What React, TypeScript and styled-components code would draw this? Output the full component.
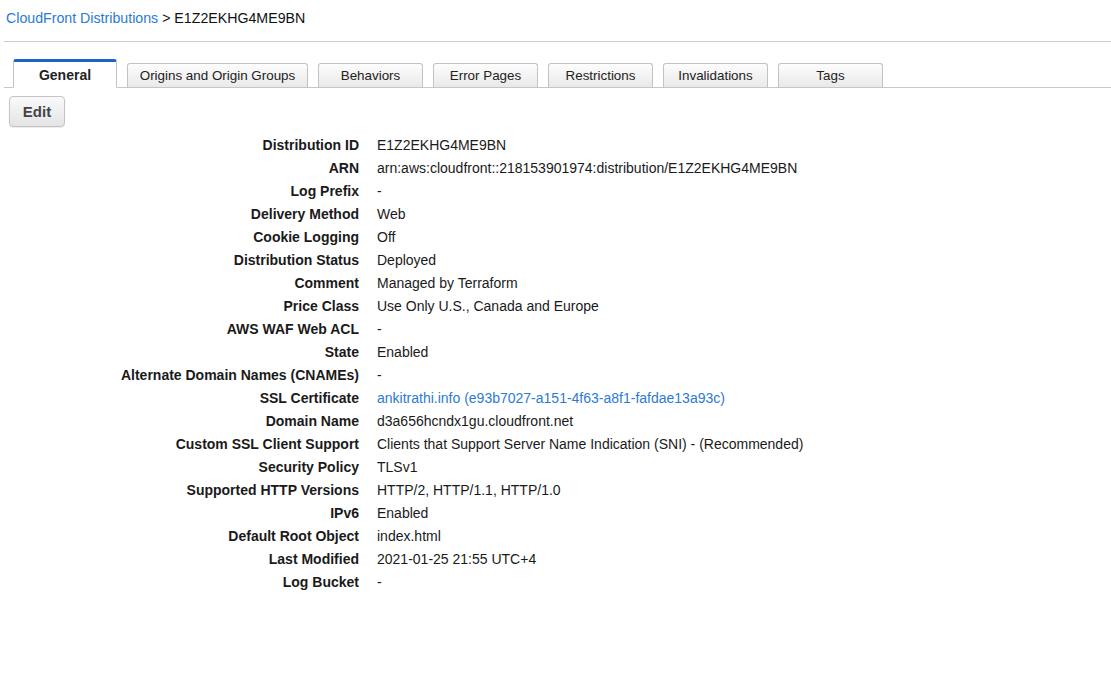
import React from "react";
import styled, { createGlobalStyle } from "styled-components";

const Global = createGlobalStyle`
  html, body { margin: 0; padding: 0; background: #fff; }
  body { font-family: "Liberation Sans", Arial, Helvetica, sans-serif; color: #222; font-size: 14px; }
`;

const Page = styled.div`
  padding-left: 4px;
  width: 1107px;
`;

const Breadcrumb = styled.div`
  margin-top: 8px;
  padding-left: 2px;
  line-height: 20px;
  font-size: 14.2px;
  color: #111;
`;

const Crumb = styled.a`
  color: #2b7bd3;
  text-decoration: none;
`;

const Rule = styled.div`
  margin-top: 13px;
  height: 1px;
  background: #cccccc;
`;

const TabStrip = styled.div`
  margin-top: 17px;
  display: flex;
  align-items: flex-end;
  gap: 10px;
  padding-left: 9px;
  border-bottom: 1px solid #c6c6c6;
  height: 28px;
`;

const Tab = styled.div<{ $active?: boolean; $w: number }>`
  box-sizing: border-box;
  width: ${(p) => p.$w}px;
  margin-bottom: -1px;
  text-align: center;
  font-size: 13.4px;
  color: #222;
  border: 1px solid #c2c2c2;
  border-radius: 3px 3px 0 0;
  ${(p) =>
    p.$active
      ? `
    height: 29px;
    line-height: 26px;
    font-size: 14px;
    font-weight: bold;
    background: #fff;
    border-top: 3px solid #1a66c8;
    border-bottom: 1px solid #fff;
  `
      : `
    height: 25px;
    line-height: 24px;
    background: linear-gradient(#fdfdfd, #e9e9e9);
    border-bottom: 1px solid #c6c6c6;
  `}
`;

const EditButton = styled.button`
  margin: 8px 0 0 5px;
  width: 56px;
  height: 31px;
  box-sizing: border-box;
  border: 1px solid #c4c4c4;
  border-radius: 4px;
  background: linear-gradient(#fafafa, #e4e4e4);
  box-shadow: 0 1px 1px rgba(0, 0, 0, 0.08);
  font-family: inherit;
  font-weight: bold;
  font-size: 15px;
  color: #444;
  padding: 0;
  display: block;
`;

const Details = styled.div`
  margin-top: 7px;
  display: grid;
  grid-template-columns: 355px 1fr;
  column-gap: 18px;
  line-height: 23px;
  font-size: 14px;
`;

const Label = styled.div`
  text-align: right;
  font-weight: bold;
  color: #1a1a1a;
`;

const Value = styled.div<{ $link?: boolean }>`
  color: ${(p) => (p.$link ? "#2b7bd3" : "#1a1a1a")};
  white-space: nowrap;
`;

const tabs: [string, number][] = [
  ["General", 104],
  ["Origins and Origin Groups", 181],
  ["Behaviors", 105],
  ["Error Pages", 105],
  ["Restrictions", 105],
  ["Invalidations", 105],
  ["Tags", 105],
];

const rows: [string, string, boolean?][] = [
  ["Distribution ID", "E1Z2EKHG4ME9BN"],
  ["ARN", "arn:aws:cloudfront::218153901974:distribution/E1Z2EKHG4ME9BN"],
  ["Log Prefix", "-"],
  ["Delivery Method", "Web"],
  ["Cookie Logging", "Off"],
  ["Distribution Status", "Deployed"],
  ["Comment", "Managed by Terraform"],
  ["Price Class", "Use Only U.S., Canada and Europe"],
  ["AWS WAF Web ACL", "-"],
  ["State", "Enabled"],
  ["Alternate Domain Names (CNAMEs)", "-"],
  ["SSL Certificate", "ankitrathi.info (e93b7027-a151-4f63-a8f1-fafdae13a93c)", true],
  ["Domain Name", "d3a656hcndx1gu.cloudfront.net"],
  ["Custom SSL Client Support", "Clients that Support Server Name Indication (SNI) - (Recommended)"],
  ["Security Policy", "TLSv1"],
  ["Supported HTTP Versions", "HTTP/2, HTTP/1.1, HTTP/1.0"],
  ["IPv6", "Enabled"],
  ["Default Root Object", "index.html"],
  ["Last Modified", "2021-01-25 21:55 UTC+4"],
  ["Log Bucket", "-"],
];

export default function App() {
  return (
    <Page>
      <Global />
      <Breadcrumb>
        <Crumb href="#">CloudFront Distributions</Crumb> &gt; E1Z2EKHG4ME9BN
      </Breadcrumb>
      <Rule />
      <TabStrip>
        {tabs.map(([t, w], i) => (
          <Tab key={t} $w={w} $active={i === 0}>
            {t}
          </Tab>
        ))}
      </TabStrip>
      <EditButton>Edit</EditButton>
      <Details>
        {rows.map(([l, v, link]) => (
          <React.Fragment key={l}>
            <Label>{l}</Label>
            <Value $link={link}>{v}</Value>
          </React.Fragment>
        ))}
      </Details>
    </Page>
  );
}
